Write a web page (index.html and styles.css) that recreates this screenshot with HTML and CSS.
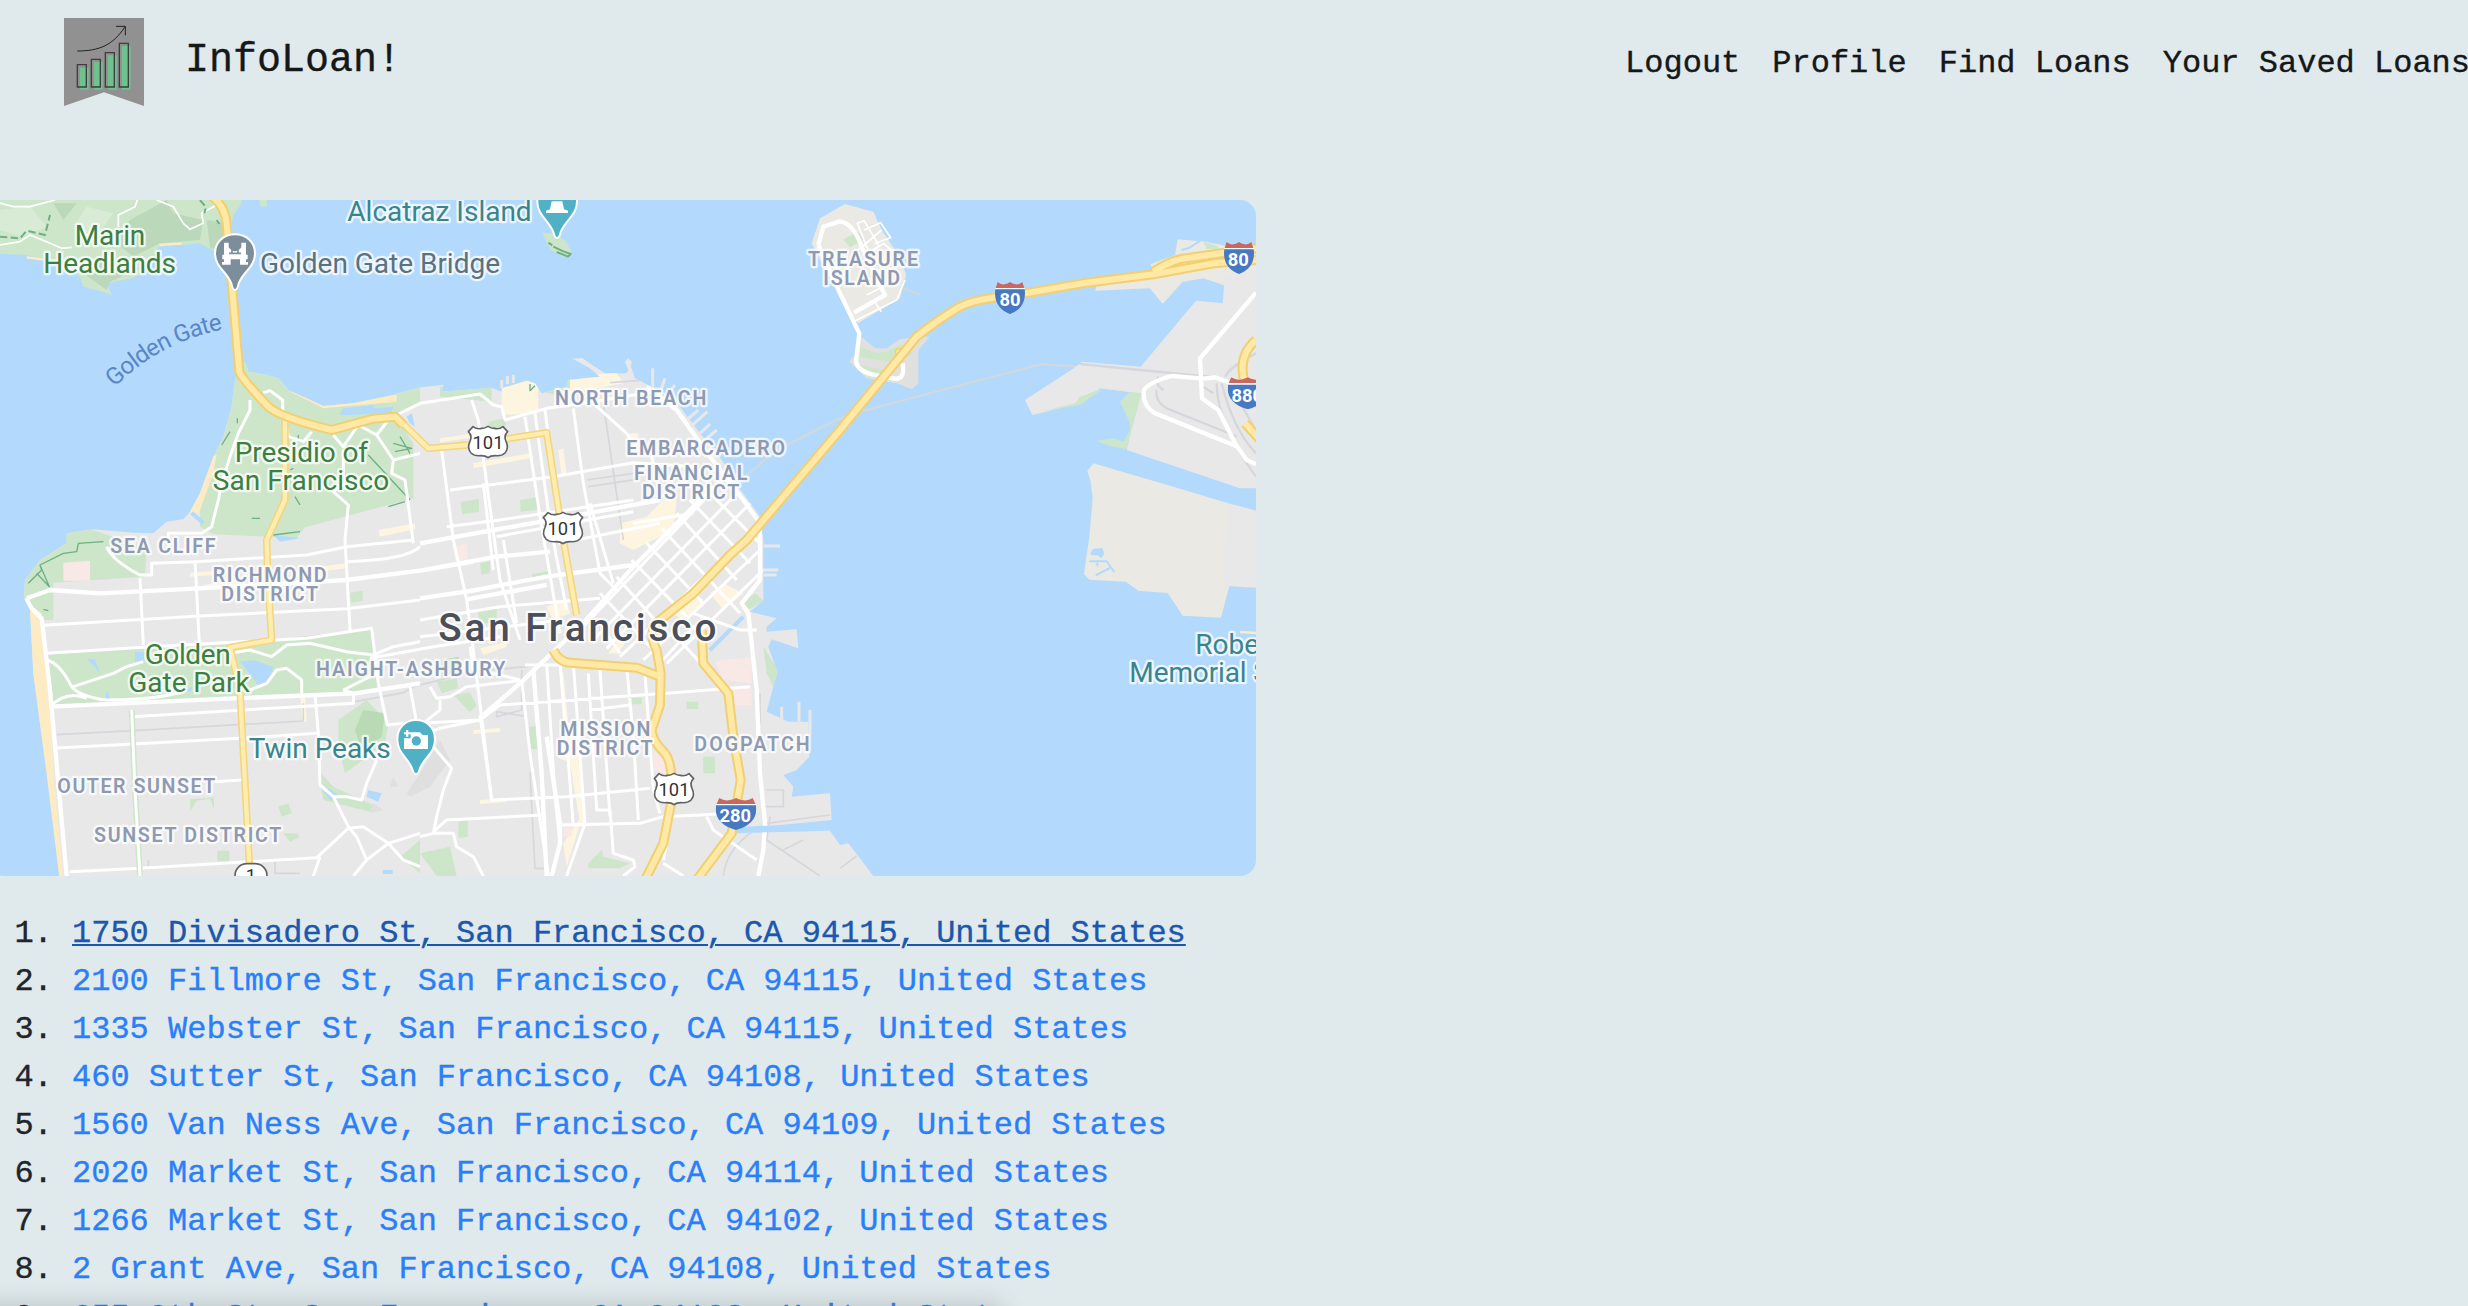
FILE: index.html
```html
<!DOCTYPE html>
<html lang="en">
<head>
<meta charset="utf-8">
<title>InfoLoan!</title>
<link rel="stylesheet" href="styles.css">
</head>
<body>
<header class="navbar">
  <a class="brand" href="#">
    <svg class="logo" viewBox="0 0 240 264" aria-hidden="true">
      <path fill="#919191" d="M0 0h240v264l-120-41L0 264z"/>
      <path fill="#6fc18d" d="M48 149h26v66H48zM90 132h26v83H90zM132 112h26v103h-26zM174 84h26v131h-26z"/>
      <g fill="none" stroke="#3c3f3d" stroke-width="4">
        <path d="M40 140h27v67H40zM82 124h27v83H82zM124 104h27v103h-27zM166 76h27v131h-27z"/>
        <path stroke="#222" stroke-width="3" d="M40 99c66 0 108-18 143-73M156 25h28v27"/>
      </g>
    </svg>
    <span class="brand-name">InfoLoan!</span>
  </a>
  <nav class="links">
    <a href="#">Logout</a><a href="#">Profile</a><a href="#">Find Loans</a><a href="#">Your Saved Loans</a>
  </nav>
</header>
<main>
<svg class="map" viewBox="-36 30 3804 2028" role="img" aria-label="Map of San Francisco">
  <defs>
    <clipPath id="city"><path d="M735 515L745 545 800 555 835 565 865 600 970 648 1060 640 1180 615 1260 592 1330 585 1325 605 1475 593 1505 605 1505 595 1580 572 1605 580 1625 610 1700 590 1705 570 1800 560 1770 535 1715 505 1745 505 1815 550 1880 550 1885 540 1875 515 1885 505 1895 515 1893 530 1905 565 1955 590 1995 610 2040 650 2100 730 2150 790 2180 830 2200 870 2240 925 2280 980 2290 1050V1230L2250 1265 2330 1285 2300 1310V1325L2390 1318 2395 1375 2315 1348 2305 1370 2332 1445 2320 1490 2300 1565 2365 1595H2425L2428 1700 2390 1740 2350 1755 2380 1790 2375 1820 2490 1810 2495 1890 2340 1905 2210 1912 2205 1930 2490 1922 2520 1965 2545 1960 2620 2058H178L140 1750 100 1450 90 1260 72 1225 75 1170 120 1110 200 1060 200 1030 280 1018 400 1028 460 1030 500 995 550 988 570 965 600 910 640 800 670 740 695 650 705 570z"/></clipPath>
    <symbol id="us" viewBox="0 0 126 100" overflow="visible"><path fill="#fff" stroke="#5f6368" stroke-width="5" d="M18 4Q30 13 44 9 54 9 63 3 72 9 82 9 96 13 108 4L122 19Q109 30 117 48 127 68 114 83 104 93 84 91 70 91 63 97 56 91 42 91 22 93 12 83-1 68 9 48 17 30 4 19z"/></symbol>
    <symbol id="interstate" viewBox="0 0 90 96" overflow="visible"><path fill="#c96861" d="M8 0Q18 9 28 7 38 6 45 0 52 6 62 7 72 9 82 0L88 18H2z"/><path fill="#fff" d="M1 18h88v4H1z"/><path fill="#4778c2" d="M1 22H89C94 58 78 84 45 96 12 84-4 58 1 22z"/></symbol>
  </defs>
  <rect x="-36" y="30" width="3804" height="2028" fill="#b3dafc"/>

  <!-- Marin Headlands -->
  <path fill="#cde6ca" d="M-36 30H723L725 40 700 75 690 130 670 185 635 180 600 160 545 165H480L430 250 395 265 320 280 335 315 290 300 250 290 240 260 185 215 130 210 80 195 -36 190zM778 30h23l-1 18-18 2z"/>
  <path fill="#bcd8bb" d="M390 90L500 30 520 70 610 90 600 150 480 160 400 200 350 160zM620 90L680 100 670 180 630 175zM250 250L310 210 420 235 330 275 320 300zM160 40l70 0-40 50z"/>
  <path fill="#d8ecd5" d="M0 60l90-10 50 60-70 30-70-20zM260 50l80 20-60 80-60-40z"/>
  <path class="minor" d="M-36 30L40 50H90L165 30M0 165L60 155 90 135 140 155 185 175 215 172M355 110V75L405 50 412 30M470 30L520 50 550 100 570 118 610 100 605 70 650 45"/>
  <path class="trail" stroke-dasharray="22 10" d="M0 140L60 145 80 122 135 135 150 75M600 30l18 22-5 18M650 90l8 12"/>
  <path class="sandline" d="M80 202L130 209M478 165L545 161"/>
  <!-- Alcatraz -->
  <path fill="#cde6ca" d="M1628 130h40l30 25 15 30-5 15h-20l-35-20-18-30z"/>
  <path class="trail" d="M1645 158l12 8M1660 170l30 14 22 8-8 8-34-14"/>
  <!-- Treasure Island and Yerba Buena -->
  <path fill="#eae9e4" d="M2435 160L2460 85 2535 42 2620 65 2645 120 2705 210 2718 255 2700 325 2590 390 2574 400 2540 350 2485 260z"/>
  <path fill="#e0e0de" d="M2584 440L2625 475 2660 475 2700 448 2750 440 2790 440 2755 480V580L2735 598 2690 580 2600 565 2548 515 2568 490z"/>
  <path fill="#cde6ca" d="M2530 148L2575 125 2590 150 2550 172zM2580 470L2630 490 2660 485 2700 463 2740 490 2690 520 2580 500zM2578 525l90 20-10 12-70-12z"/>
  <path class="minor" d="M2572 100l20-8 45 75-30 20zM2592 120l50-22 30 45-50 18M2610 190l40-30 25 20M2645 120l-70 60M2600 315l40-20 20 20-36 20 20 30M2560 395L2690 330 2715 270"/>
  <path class="major" d="M2455 165L2470 110 2520 94Q2560 100 2585 170L2655 315 2562 368M2455 165L2520 310 2578 430 2568 515Q2575 545 2625 555L2690 567Q2715 565 2708 520"/>
  <path fill="none" stroke="#d5d8da" stroke-width="6" d="M2708 295l52 18M2200 890L2330 780 2520 685 2590 662 3125 522 3490 550"/>

  <!-- East Bay -->
  <path fill="#eae9e4" d="M3452 222L3525 195 3533 148 3615 155 3768 185V300H3740L3670 285 3610 265 3548 275 3488 342 3450 295 3285 302 3290 288 3460 250z"/>
  <path fill="#e8e8e8" d="M3768 240L3670 262 3672 290 3668 340 3588 332 3422 530 3245 515 3240 522 3190 555 3075 630 3097 675 3240 640 3300 595 3420 610 3380 780 3720 895H3768z"/>
  <path fill="#cde6ca" d="M3130 663L3225 640 3240 620 3310 595 3290 610 3240 645zM3360 635L3390 605 3425 610 3380 775 3365 765 3390 720 3390 700zM3290 753L3340 745 3382 760 3380 778 3330 768zM3610 155l40 12 10 10h-40z"/>
  <path fill="#eae9e4" d="M3262 843L3280 820 3520 890 3685 940 3688 1188 3663 1283 3548 1277 3503 1209 3415 1202 3378 1175 3268 1169 3252 1152 3268 1040 3278 925 3272 875z"/>
  <path fill="#e8e8e8" d="M3685 940L3768 962V1193L3668 1187z"/>
  <path fill="#b3dafc" d="M3270 1090l10-14 28-2 5 18-10 12-10-8h-18z"/>
  <path fill="none" stroke="#b3dafc" stroke-width="6" d="M3268 1114H3320L3343 1146M3330 1134L3287 1156M3292 1118v10M3545 180l20-5 35-22"/>
  <path class="sandline" d="M3720 1326l48 3"/>
  <path class="rail" stroke-width="7" d="M3240 522L3420 540 3630 560 3700 580M3490 600Q3460 580 3475 560M3470 600Q3465 635 3500 655L3700 735 3710 740M3650 580Q3650 700 3768 860M3665 580Q3700 720 3768 790M3680 570L3768 720M3675 560Q3690 530 3768 490M3610 590l30 20"/>
  <path class="major" d="M3768 308L3600 505 3606 625 3655 660 3708 765 3740 810 3768 822M3708 768L3465 670Q3425 645 3432 600 3450 575 3515 558L3610 566 3645 562 3700 582"/>

  <!-- City -->
  <g clip-path="url(#city)">
    <rect x="60" y="490" width="2570" height="1580" fill="#e8e8e8"/>
    <path fill="#cde6ca" d="M600 960L640 800 690 500H860L1260 560V640L1190 680 1240 760V925L915 1012 890 1045 640 1032 600 1010zM60 1225V1020H280L440 1075 435 1160 160 1178V1290L125 1290zM137 1395L430 1370 815 1350 1115 1315 1140 1490 1065 1505 150 1547zM1320 590L1475 590V635L1320 620zM1465 695l52-10v22l-50 10zM1382 935l55-8v38l-50 8zM1560 930l50-8v38l-48 5zM1605 600l90-50 25 40-50 25z"/>
    <path fill="#cde6ca" d="M1050 1208l38-6v30l-36 6zM1015 1590l85-60 65 70-10 60-120 90-20-80zM955 1740l45 50 120 55-10 20-140-35zM835 1850l30-10 10 30-30 10zM850 1930h40l10 10-30 15zM652 1982h36v32h-36zM570 1828l72-6v35l-12-30-40 5-18 30zM1440 1120l30-6v35l-26 6zM1595 1152l50-8v15l-48 10zM1435 1260l55-8v45l-52 5zM1310 1475l60-10 5 30-50 15zM1360 1515l50-8 20 40-20 20zM1580 1612l30-5 5 70h-30zM1895 1523h30v20h-30zM2060 1535h35v22h-35zM2110 1700h35v50h-35zM2225 1240l40-30 25 22-40 25zM2290 1370l45 70-15 50-20-40zM1375 1895l28-5v50l-28 5zM1260 1990l90-20 20 88h-60zM1765 2020l40-40 5 20 80 20-30 15h-95zM1200 2000l60-50v100z"/>
    <path fill="#b8dab5" d="M1090 1560l65 10-10 70-60 40-20-60zM1325 1410l50-10 10 40-60 20z"/>
    <path fill="#dfdfe0" d="M1220 1810l40-60 60-100 30 60-60 80-60 30zM1170 1790l10-30 15 30zM1120 1840l30 20-40 10zM2190 1900l60-50 15 10-50 50z"/>
    <path fill="#fdebc3" d="M865 602L970 636 1060 628 1140 610 1190 615V635L970 655zM60 1220L125 1270 150 1500 160 1750 190 2060H60zM560 960L625 800 650 795 640 850 600 960 585 975z"/>
    <path fill="#fdf5df" d="M1505 570h110v100l-110 5zM1710 560l120-10-120-60 30 0 110 60 20 30-160 30zM1420 820l170-30v15l-170 30zM1320 745l170-25v12l-170 25zM1675 780l15-5 10 80-15 5zM1890 730h25v60h-25zM1135 1020l110-20v18l-105 22zM960 1130l80-10v15l-80 10zM610 1185l100-15v15l-100 12zM570 1148l70-5v12l-70 5zM1860 1000l80-20 50-50 40 0-10 90-120 60-40-20zM1640 1250l60-20 10 40-50 20zM1680 1450l10 0 15 150 30 0 20 300-15 0-30-180-40-20 20-80zM1825 1390l30-40 20 10-20 30zM2130 1210l40-30 60 30-60 50zM1440 1375l80-20v15l-70 25zM900 1515h15l5 80h-12zM1440 1830l80-6v12l-80 6zM1420 1620l80-6v12l-80 6zM1690 1960l60-90-50 160zM2000 1260l60-50 50 30-60 50z"/>
    <path fill="#f9e9e6" d="M190 1118L270 1112V1172H190zM1355 1070l45-10 5 50-38 5zM2145 1415L2255 1400V1480L2170 1470zM2190 1495h65v50h-55zM1960 1680l60 60-5 20-55-20zM1690 1910h25v30h-25z"/>
    <path fill="#b3dafc" d="M1020 670l10-15 95-10-5 10 60-5-5 18-150 8zM260 1405l25 5 15 40zM405 1385h30l-5 35h-25zM720 1415l40-5 60 20-15 45-30 10zM960 1790l35 10 25 20-30 10zM1105 1800l40 10-10 25-35-15zM1220 680l15-10 10 40-15-10zM320 1500l12 30-15-3zM535 1505l45-15-10 15zM1148 2040h30v12h-30zM820 1035l80 10-60 10z"/>
    <path fill="none" stroke="#b3dafc" stroke-width="12" d="M2130 1380L2230 1280M575 968L610 1000"/>
    <path class="rail" stroke-width="5" d="M170 1634L400 1622 910 1593V1540M1065 1535L1210 1508 1240 1490 1420 1445 1600 1428M1565 1440V1560L1490 1580V1565L1570 1578M1590 1690Q1605 1740 1590 1750L1605 2035 1640 2035M1810 640L1870 1050M1760 870L1900 850M1765 890L1910 868M1830 578L1940 570 2060 620M2280 1510V1600M2170 2058Q2180 1960 2300 1900L2490 1875M2310 1880L2300 1950 2460 2058M2300 1800H2350V1850H2290M2520 2035L2570 1998M2350 1980L2410 1950M825 2015V2050H900M445 2010v20"/>
    <path class="trail thin" d="M85 1180L125 1140 120 1125 190 1090 230 1085 235 1060 310 1055M120 1125L148 1190 110 1150M130 1258l15 4M1105 795L1230 930M1165 950L1215 935M1180 760l55 15-50 10M1200 740l30 50M665 765l25-40M712 685v15M820 1035l80-10M895 735v20M870 840l10-5M755 985h25M885 920l15 25M1590 582v20l15-15"/>

    <!-- local streets -->
    <path class="street" d="M790 608L810 602 848 630V655L865 740 910 755 935 725M750 630V660L715 730 690 800 665 880 655 930 635 1010 605 1030H505V1060M1000 735L1030 770 1075 705 1130 735 1165 690M1130 735L1180 810 1260 790M1180 810L1175 850 1215 870 1240 1060M1030 780V880L1000 905 1045 945 1035 1050 1050 1320M1190 675L1260 640 1340 628 1440 612 1480 645 1505 650 1515 690 1640 655 1780 635 1990 600"/>
    <path class="street" d="M320 1070Q335 1110 420 1155H455V1120L590 1115 920 1095 1040 1070 1240 1050M1040 1115Q1220 1110 1260 1070M420 1165L430 1365M585 1110L598 1360M130 1306L600 1278 1040 1256 1260 1230M137 1390L430 1372 920 1345 1115 1315 1135 1480 1150 1550 1162 1605 1210 1600"/>
    <path class="street" d="M140 1410Q180 1420 215 1490 240 1520 320 1530 480 1530 560 1500M220 1490L340 1450 380 1430 430 1415M150 1550Q200 1500 260 1525M690 1390L750 1380 815 1400 860 1365 930 1360 1040 1385 1120 1395 1180 1370 1260 1355M750 1500L800 1480 830 1440 860 1435 905 1470V1510M1110 1405L1300 1370 1500 1340M1030 1500L1090 1470 1130 1450"/>
    <path class="street" d="M395 1580L930 1548 1060 1540 1062 1510 1030 1500M170 1674L400 1662 720 1645 950 1630M645 1775L730 1769M210 2045L420 2035 950 2003 1045 1915 1090 1910 1165 1960 1260 1930M945 1515L955 1630 960 1785 1000 1820 1045 1910 1070 1940 1100 2010M1000 1820L1040 1820 1085 1830 1100 1780 1130 1710M1230 1490L1250 1600M1165 1960L1100 2010 1060 2058M1165 1960L1210 2010 1260 2030M960 2000L940 2058"/>
    <path stroke="#cde6ca" stroke-width="18" fill="none" d="M395 1560L405 1800 420 2058"/><path class="street" d="M395 1560L405 1800 420 2058"/>
    <path class="major" d="M80 1225L150 1200 300 1210 600 1195 1040 1170 1260 1142 1490 1100 1650 1085M80 1225Q85 1250 125 1285L150 1500 175 1780 200 2058M150 1550L700 1525 1065 1510 1260 1480M1260 1060L1480 1020 1680 985 1980 930M1260 1142L1420 1115M1260 1225L1410 1203 1640 1160 1900 1125M1400 1228L1640 1185"/>
    <path class="street" d="M1415 630L1435 690 1460 880 1500 1170 1560 1350M1325 780L1360 1050 1400 1230 1425 1420 1475 1830M1350 900L1660 860 1900 818 2090 830M1340 1010L1500 990 1900 930M1450 880L1480 1140M1490 1040L1900 965M1510 1050L1550 1300M1575 680L1620 980 1680 1330M1605 670L1650 1000 1700 1260M1635 660L1660 850 1670 970M1720 655L1750 880 1800 1150 1850 1200M1780 640L1880 730 1900 760M1950 780L1960 820M1770 940L1840 1180M1900 1000L2080 970M1260 1290L1500 1250 1800 1225M1260 1340L1480 1315 1680 1290M1640 1000L1680 1060 1980 1000M1410 1370L1420 1440"/>
    <!-- downtown diagonal grid -->
    <path class="street" d="M1740 1320L2150 890M1780 1350L2210 910M1820 1375L2250 940M1860 1400L2270 1010M1930 1410L2280 1080M2000 1420L2290 1140M1800 1210L1960 1380M1850 1160L2000 1330M1895 1110L2060 1280M1940 1060L2110 1240M1985 1015L2220 1270M2030 970L2210 1170M2070 930L2250 1120M2110 890L2280 1060M1860 1390L1800 1300M1980 1420L2080 1310 2120 1350M2080 1270L2220 1320H2270M2030 1340L2120 1440"/>
    <path class="major" d="M1450 1575L1560 1480 1660 1385 1740 1310 1900 1130 2140 890"/>
    <!-- Mission grid -->
    <path class="street" d="M1565 1470L1590 1690 1645 2058M1600 1450L1630 1820M1640 1420L1665 1820 1680 1960M1680 1420L1700 1650 1720 1910M1720 1420L1755 1900 1700 2058M1765 1450L1790 1860 1830 1860 1840 1990 1900 2010 1905 2030 1870 2058M1800 1440L1830 1880M1880 1430L1900 1640 1915 1890M1935 1450L1960 1800 1980 1870M1500 1545L1780 1525 2000 1510 2250 1490M1575 1425L1700 1425M1770 1560L1890 1545M1440 1575L1475 1830 1700 1820 1950 1795M1680 1905L1920 1900 1990 1880 2100 1875 2270 1865M1440 1440L1560 1470M1260 1600L1440 1590 1500 1545M1290 1490L1310 1525 1350 1520 1400 1490 1560 1472M1320 1530V1560L1270 1600M2120 1880L2140 1920 2270 2010M1990 2020L2050 2058"/>
    <path class="street" d="M1300 1670L1355 1735 1330 1800 1310 1880 1300 1930 1260 1940M1300 1925L1340 1890 1630 1875M1300 1930L1360 1930 1370 1970 1420 2000 1450 2058M1260 1635L1320 1615 1440 1590M2010 1880L2000 1960 1990 2010"/>
    <path class="major" d="M1600 1440L1625 1750 1640 2058M1640 1640L1680 1900V1960L1655 2058M1940 590L2030 660 2130 800 2230 930 2280 1000 2280 1170 2225 1240 2245 1270 2270 1500 2280 1750 2295 1900 2290 1980 2275 2058"/>
  </g>
  <path class="pier" d="M1505 570v25M1522 558v25M1540 554v25M1958 535v65M1995 565l-14 40M2025 585l-22 28M2060 690l35-30M2072 710l50-45M2100 730l30-28M2115 750l35-30M2290 1068h50M2290 1140h45M2290 1155h40M2345 1550v40M2397 1535v60M2430 1560v75"/>

  <!-- highways -->
  <path class="hw-edge" d="M855 690V930L800 1050 803 1150 815 1350 690 1372 720 1500 750 2058"/>
  <path class="hw-fill" d="M855 690V930L800 1050 803 1150 815 1350 690 1372 720 1500 750 2058"/>
  <path class="hw-edge" d="M1160 682L1190 682 1285 775 1400 765 1640 728 1690 1050 1730 1275"/>
  <path class="hw-fill" d="M1160 682L1190 682 1285 775 1400 765 1640 728 1690 1050 1730 1275"/>
  <path class="fw-edge" d="M630 15Q675 45 680 100L697 300 718 545Q725 565 800 645 830 680 995 720L1120 686 1185 680 1210 705"/>
  <path class="fw-fill" d="M630 15Q675 45 680 100L697 300 718 545Q725 565 800 645 830 680 995 720L1120 686 1185 680 1210 705"/>
  <path class="fw-edge" d="M3460 245Q3520 205 3570 203L3768 175M3735 700L3790 760M3768 450Q3710 500 3735 580"/>
  <path fill="#ffe9a5" stroke="#f1cf73" stroke-width="5" d="M2712 476h-20q-12 10 0 24l14 2z"/>
  <path class="fw-edge" d="M3768 210L3640 220 3460 253 3260 278 3030 318Q2930 325 2880 350 2820 385 2750 440L2520 720 2240 1050 2190 1095 2080 1210 1980 1290Q1940 1320 1970 1380L1982 1450 1980 1545 1955 1620Q1955 1650 1995 1690 2020 1720 2015 1830L1990 1960 1935 2070M1660 1380Q1675 1415 1710 1418L1910 1433 1975 1458M2105 1320L2110 1420 2185 1510 2200 1640 2222 1770 2195 1930 2090 2070"/>
  <path class="fw-fill" d="M3768 210L3640 220 3460 253 3260 278 3030 318Q2930 325 2880 350 2820 385 2750 440L2520 720 2240 1050 2190 1095 2080 1210 1980 1290Q1940 1320 1970 1380L1982 1450 1980 1545 1955 1620Q1955 1650 1995 1690 2020 1720 2015 1830L1990 1960 1935 2070M1660 1380Q1675 1415 1710 1418L1910 1433 1975 1458M2105 1320L2110 1420 2185 1510 2200 1640 2222 1770 2195 1930 2090 2070M3460 245Q3520 205 3570 203L3768 175M3768 450Q3710 500 3735 580M3735 700L3790 760"/>

  <!-- pins -->
  <g stroke="#fff" stroke-width="6">
    <path fill="#7c8e9b" d="M705 300Q698 300 694 280C680 245 645 230 645 190 645 156 672 133 705 133S765 156 765 190C765 230 730 245 716 280Q712 300 705 300z"/>
    <path fill="#4fb0c6" d="M1671 144Q1664 144 1660 126C1646 90 1612 75 1612 35 1612 0 1638-23 1671-23S1731 0 1731 35C1731 75 1696 90 1682 126Q1678 144 1671 144z"/>
    <path fill="#4fb0c6" d="M1248 1753Q1241 1753 1236 1735C1222 1700 1192 1690 1192 1648 1192 1613 1216 1590 1248 1590S1305 1613 1305 1648C1305 1690 1274 1700 1260 1735Q1255 1753 1248 1753z"/>
  </g>
  <path fill="#fff" d="M672 158h14v14q19 24 38 0v-14h14v36h5v14h-5v8h6v8h-24v-16h-28v16h-26v-8h6v-8h-5v-14h5zM1655 34h32l5 24 12 4v7h-66v-7l12-4zM1212 1645h20v-18h28l8 8h16v42h-72zM1218 1620h7v7h7v6h-7v7h-7v-7h-6v-6h6z"/>
  <path fill="none" stroke="#7c8e9b" stroke-width="5" d="M687 190h36M696 170v18M714 170v18"/>
  <circle cx="1249" cy="1653" r="14" fill="#4fb0c6"/>

  <!-- route shields -->
  <use href="#us" x="1401" y="706" width="126" height="100"/><use href="#us" x="1626" y="964" width="126" height="100"/><use href="#us" x="1959" y="1747" width="126" height="100"/>
  <rect x="705" y="2021" width="96" height="80" rx="36" fill="#fff" stroke="#5f6368" stroke-width="5"/>
  <use href="#interstate" x="2985" y="276" width="90" height="96"/><use href="#interstate" x="3672" y="156" width="90" height="96"/>
  <svg x="3683" y="562" width="120" height="96" viewBox="0 0 90 96" preserveAspectRatio="none"><use href="#interstate" width="90" height="96"/></svg>
  <svg x="2147" y="1824" width="122" height="96" viewBox="0 0 90 96" preserveAspectRatio="none"><use href="#interstate" width="90" height="96"/></svg>
  <g class="us-num"><text x="1464" y="777">101</text><text x="1689" y="1035">101</text><text x="2022" y="1818">101</text><text x="753" y="2077">1</text></g>
  <g class="int-num"><text x="3030" y="349">80</text><text x="3715" y="229">80</text><text x="3742" y="635">880</text><text x="2206" y="1897">280</text></g>

  <!-- place names -->
  <g class="park-name"><text x="224" y="165" textLength="212">Marin</text><text x="130" y="249" textLength="398">Headlands</text><text x="704" y="815" textLength="400">Presidio of</text><text x="638" y="899" textLength="530">San Francisco</text><text x="434" y="1421" textLength="258">Golden</text><text x="385" y="1505" textLength="364">Gate Park</text></g>
  <g class="poi-name"><text x="1042" y="93" textLength="553">Alcatraz Island</text><text x="746" y="1704" textLength="426">Twin Peaks</text><text x="3586" y="1391">Robert Sibley</text><text x="3388" y="1476" textLength="352">Memorial</text><text x="3760" y="1476">S</text></g>
  <text class="bridge-name" x="780" y="249" textLength="720">Golden Gate Bridge</text>
  <path id="strait" fill="none" d="M344 592Q486 448 696 413"/>
  <text class="water-name"><textPath href="#strait" textLength="374">Golden Gate</textPath></text>
  <g class="area-name">
    <text x="2424" y="228" textLength="330">TREASURE</text><text x="2470" y="286" textLength="230">ISLAND</text>
    <text x="1665" y="645" textLength="454">NORTH BEACH</text><text x="1879" y="795" textLength="476">EMBARCADERO</text>
    <text x="1902" y="870" textLength="340">FINANCIAL</text><text x="1926" y="927" textLength="292">DISTRICT</text>
    <text x="331" y="1088" textLength="316">SEA CLIFF</text><text x="638" y="1175" textLength="342">RICHMOND</text><text x="664" y="1233" textLength="290">DISTRICT</text>
    <text x="948" y="1458" textLength="568">HAIGHT-ASHBURY</text><text x="172" y="1809" textLength="474">OUTER SUNSET</text><text x="282" y="1956" textLength="562">SUNSET DISTRICT</text>
    <text x="1681" y="1637" textLength="270">MISSION</text><text x="1670" y="1695" textLength="288">DISTRICT</text><text x="2083" y="1683" textLength="346">DOGPATCH</text>
  </g>
  <text class="city-name" x="1315" y="1352" textLength="834">San Francisco</text>
</svg>
<ol class="results">
  <li><a class="active" href="#">1750 Divisadero St, San Francisco, CA 94115, United States</a></li>
  <li><a href="#">2100 Fillmore St, San Francisco, CA 94115, United States</a></li>
  <li><a href="#">1335 Webster St, San Francisco, CA 94115, United States</a></li>
  <li><a href="#">460 Sutter St, San Francisco, CA 94108, United States</a></li>
  <li><a href="#">1560 Van Ness Ave, San Francisco, CA 94109, United States</a></li>
  <li><a href="#">2020 Market St, San Francisco, CA 94114, United States</a></li>
  <li><a href="#">1266 Market St, San Francisco, CA 94102, United States</a></li>
  <li><a href="#">2 Grant Ave, San Francisco, CA 94108, United States</a></li>
  <li><a href="#">655 9th St, San Francisco, CA 94103, United States</a></li>
</ol>
</main>
<div class="status-shadow"></div>
</body>
</html>
```

FILE: styles.css
```css
* { box-sizing: border-box; }
body {
  margin: 0;
  height: 1306px;
  overflow: hidden;
  background: #e0e9ec;
  color: #212529;
  font: 32px/48px "Courier New", "Liberation Mono", monospace;
  -webkit-text-stroke: .35px currentColor;
}
a { color: #2a7ff9; text-decoration: none; }

.navbar {
  display: flex;
  justify-content: space-between;
  align-items: flex-start;
  height: 200px;
  padding-left: 64px;
}
.brand { display: flex; gap: 41px; padding-top: 18px; color: #151818; }
.logo { width: 80px; height: 88px; }
.brand-name { font-size: 40px; line-height: 60px; padding-top: 13px; }
.links { display: flex; gap: 32px; padding-top: 40px; margin-right: -2px; }
.links a { color: #151818; white-space: nowrap; }

.map {
  display: block;
  width: 1268px;
  height: 676px;
  margin-left: -12px;
  border-radius: 16px;
}
.map path { stroke-linejoin: round; }
.minor, .street, .major { fill: none; stroke: #fff; }
.minor { stroke-width: 5; }
.street { stroke-width: 9; }
.major { stroke-width: 13; }
.trail { fill: none; stroke: #6db083; stroke-width: 6; }
.thin { stroke-width: 4; }
.sandline { fill: none; stroke: #fdebc3; stroke-width: 7; }
.rail { fill: none; stroke: #d6d7dc; }
.pier { fill: none; stroke: #e8e8e8; stroke-width: 9; }
.hw-edge, .hw-fill, .fw-edge, .fw-fill { fill: none; }
.hw-edge { stroke: #f4d47d; stroke-width: 22; }
.hw-fill { stroke: #ffedb0; stroke-width: 13; }
.fw-edge { stroke: #f1cf73; stroke-width: 30; }
.fw-fill { stroke: #ffe9a5; stroke-width: 18; }

.map text {
  font-family: Roboto, "Liberation Sans", sans-serif;
  font-size: 84px;
  paint-order: stroke;
  stroke: rgba(255, 255, 255, .75);
  stroke-width: 14px;
  stroke-linejoin: round;
}
.park-name { fill: #3b8041; }
.poi-name { fill: #38858f; }
.bridge-name { fill: #5a7183; }
.map .water-name { fill: #5a85c7; stroke: none; font-size: 72px; }
.map .area-name text { font-size: 59px; font-weight: 600; }
.area-name { fill: #8e9ab3; }
.map .city-name { fill: #4a4f59; font-size: 116px; font-weight: 500; }
.map .us-num text, .map .int-num text { stroke: none; text-anchor: middle; font-size: 55px; }
.us-num { fill: #333; }
.int-num { fill: #fff; font-weight: 700; }

.results { margin: 0; padding: 34px 0 0 72px; }
.results li { white-space: nowrap; }
.results .active {
  color: #1b57ae;
  text-decoration: underline;
  text-decoration-thickness: 2px;
  text-underline-offset: 2px;
}

/* edge shadow above the browser status bubble */
.status-shadow {
  position: absolute;
  top: 1308px;
  left: -40px;
  width: 1040px;
  height: 40px;
  box-shadow: 0 0 24px 2px rgba(60, 75, 75, .26);
}
```
